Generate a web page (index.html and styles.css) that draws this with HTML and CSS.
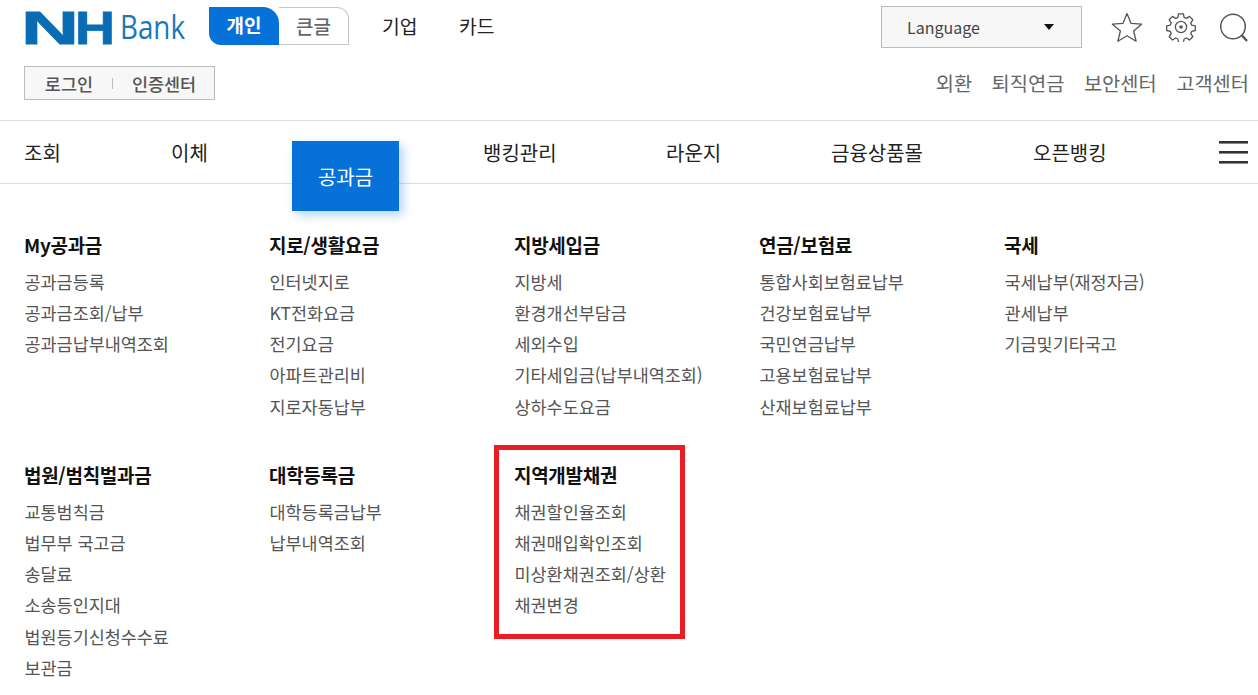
FILE: index.html
```html
<!DOCTYPE html>
<html lang="ko">
<head>
<meta charset="utf-8">
<title>NH Bank</title>
<link rel="stylesheet" href="styles.css">
</head>
<body>
<header class="top">
  <div class="top-left">
    <div class="brand-row">
      <svg class="logo" width="162" height="46" viewBox="0 0 162 46">
        <text class="logo-nh" x="-3" y="38" textLength="58" lengthAdjust="spacingAndGlyphs">N</text>
        <text class="logo-nh" x="51" y="38" textLength="40" lengthAdjust="spacingAndGlyphs">H</text>
        <text class="logo-bank" x="96" y="33" textLength="65" lengthAdjust="spacingAndGlyphs">Bank</text>
      </svg>
      <div class="toggle">
        <span class="toggle-on">개인</span>
        <span class="toggle-off">큰글</span>
      </div>
      <a class="seg">기업</a>
      <a class="seg">카드</a>
    </div>
    <div class="login-box">
      <span>로그인</span>
      <i class="sep"></i>
      <span>인증센터</span>
    </div>
  </div>
  <div class="top-right">
    <div class="tools">
      <div class="lang"><span>Language</span><i class="caret"></i></div>
      <svg class="tool-star" width="32" height="30" viewBox="0 0 32 30"><path d="M16 1.5l4 9.8 10.6.9-8 6.8 2.5 10.2-9.100-5.400-9.100 5.400 2.500-10.200-8-6.800 10.600-.9z" fill="none" stroke="#555" stroke-width="1.3" stroke-linejoin="round"/></svg>
      <svg class="tool-gear" width="30" height="30" viewBox="0 0 30 30"><path d="M12.6 1.800h4.800l.7 3.600 2.300 1 3.100-2 3.300 3.400-2 3 .9 2.400 3.600.7v4.600l-3.600.8-.9 2.300 2 3.100-3.300 3.300-3.100-2-2.300 1-.7 3.600h-4.800l-.7-3.600-2.300-1-3.100 2-3.300-3.300 2-3.100-.9-2.300-3.600-.8v-4.600l3.600-.7.9-2.400-2-3 3.300-3.400 3.100 2 2.300-1z" fill="none" stroke="#555" stroke-width="1.3" stroke-linejoin="round"/><circle cx="15" cy="15" r="5.600" fill="none" stroke="#555" stroke-width="1.3"/><circle cx="15" cy="15" r="1.800" fill="#555"/></svg>
      <svg class="tool-search" width="30" height="30" viewBox="0 0 30 30"><circle cx="13" cy="13.500" r="12.300" fill="none" stroke="#555" stroke-width="1.500"/><path d="M22 22.500l5 5.500" stroke="#555" stroke-width="2.400"/></svg>
    </div>
    <nav class="util">
      <a>외환</a><a>퇴직연금</a><a>보안센터</a><a>고객센터</a>
    </nav>
  </div>
</header>

<nav class="gnb">
  <a class="gnb-item w-jo">조회</a>
  <a class="gnb-item w-ic">이체</a>
  <a class="gnb-active">공과금</a>
  <a class="gnb-item w-bk">뱅킹관리</a>
  <a class="gnb-item w-ra">라운지</a>
  <a class="gnb-item w-gu">금융상품몰</a>
  <a class="gnb-item w-op">오픈뱅킹</a>
  <span class="burger"><i></i><i></i><i></i></span>
</nav>

<main class="menu">
  <section class="col">
    <h2>My공과금</h2>
    <ul><li>공과금등록</li><li>공과금조회/납부</li><li>공과금납부내역조회</li></ul>
  </section>
  <section class="col">
    <h2>지로/생활요금</h2>
    <ul><li>인터넷지로</li><li>KT전화요금</li><li>전기요금</li><li>아파트관리비</li><li>지로자동납부</li></ul>
  </section>
  <section class="col">
    <h2>지방세입금</h2>
    <ul><li>지방세</li><li>환경개선부담금</li><li>세외수입</li><li>기타세입금(납부내역조회)</li><li>상하수도요금</li></ul>
  </section>
  <section class="col">
    <h2>연금/보험료</h2>
    <ul><li>통합사회보험료납부</li><li>건강보험료납부</li><li>국민연금납부</li><li>고용보험료납부</li><li>산재보험료납부</li></ul>
  </section>
  <section class="col">
    <h2>국세</h2>
    <ul><li>국세납부(재정자금)</li><li>관세납부</li><li>기금및기타국고</li></ul>
  </section>
  <section class="col">
    <h2>법원/범칙벌과금</h2>
    <ul><li>교통범칙금</li><li>법무부 국고금</li><li>송달료</li><li>소송등인지대</li><li>법원등기신청수수료</li><li>보관금</li></ul>
  </section>
  <section class="col">
    <h2>대학등록금</h2>
    <ul><li>대학등록금납부</li><li>납부내역조회</li></ul>
  </section>
  <section class="col col-marked">
    <h2>지역개발채권</h2>
    <ul><li>채권할인율조회</li><li>채권매입확인조회</li><li>미상환채권조회/상환</li><li>채권변경</li></ul>
  </section>
</main>
</body>
</html>
```
FILE: styles.css
```css
*, *::before { box-sizing: border-box; }
html, body { margin: 0; padding: 0; }
body {
  width: 1258px;
  height: 695px;
  overflow: hidden;
  background: #fff;
  color: #222;
  font-family: "Noto Sans CJK KR", "Noto Sans", sans-serif;
}
ul { list-style: none; margin: 0; padding: 0; }
h2 { margin: 0; }

.top {
  height: 121px;
  padding: 6px 8px 0 24px;
  display: flex;
  justify-content: space-between;
  border-bottom: 1px solid #ddd;
}
.brand-row { display: flex; align-items: flex-start; height: 60px; }
.logo { display: block; margin-right: 23px; overflow: visible; }
.logo-nh { font: 700 47px "Liberation Sans", sans-serif; fill: #0a6cb3; stroke: #0a6cb3; stroke-width: .8px; }
.logo-bank { font: 400 32px "Open Sans", sans-serif; fill: #1a78b8; }

.toggle {
  display: flex;
  width: 140px;
  height: 38px;
  margin-top: 1px;
  font-size: 19px;
  line-height: 36px;
  font-weight: 500;
}
.toggle-on {
  width: 70px;
  background: #0671d9;
  color: #fff;
  text-align: center;
  border-radius: 0 16px 0 12px;
  font-weight: 700;
}
.toggle-off {
  width: 70px;
  color: #666;
  text-align: center;
  border: 1px solid #c4c4c4;
  border-left: 0;
  border-radius: 0 12px 0 0;
}
.seg { font-size: 19.3px; line-height: 40px; color: #222; margin-left: 33px; width: 44px; }
.seg + .seg { margin-left: 33px; }

.login-box {
  width: 191px;
  height: 34px;
  display: flex;
  align-items: center;
  justify-content: center;
  padding-left: 2px;
  background: #f7f7f7;
  border: 1px solid #bbb;
  font-size: 17.45px;
  color: #555;
  font-weight: 500;
}
.sep { width: 1px; height: 11px; background: #bbb; margin: 0 19px; }

.top-right { display: flex; flex-direction: column; align-items: flex-end; }
.tools { display: flex; align-items: center; height: 42px; }
.lang {
  width: 201px;
  height: 42px;
  background: #f7f7f7;
  border: 1px solid #bbb;
  display: flex;
  align-items: center;
  justify-content: space-between;
  padding: 0 27px 0 25px;
  font-size: 16px;
  color: #444;
}
.caret { width: 0; height: 0; border: 5px solid transparent; border-top: 6px solid #111; border-bottom: 0; }
.tool-star { margin-left: 29px; }
.tool-gear { margin-left: 23px; margin-right: 24px; }
.tool-search { margin-top: 2px; }

.util {
  display: flex;
  gap: 19.500px;
  margin-top: 21px;
  margin-right: 1px;
  font-size: 19.8px;
  line-height: 28px;
  color: #666;
}

.gnb {
  position: relative;
  height: 63px;
  border-bottom: 1px solid #ddd;
  display: flex;
  align-items: flex-start;
  padding-left: 24px;
  font-size: 20px;
  color: #222;
}
.gnb-item { line-height: 64px; display: block; }
.w-jo { width: 147px; }
.w-ic { width: 121px; }
.w-bk { margin-left: 84px; width: 183px; }
.w-ra { width: 165px; }
.w-gu { width: 202px; }
.w-op { width: 186px; }
.gnb-active {
  width: 107px;
  height: 70px;
  margin-top: 20px;
  background: #0671d9;
  color: #fff;
  text-align: center;
  line-height: 72px;
  box-shadow: 4px 4px 10px rgba(6, 113, 217, .3);
  position: relative;
  z-index: 1;
}
.burger {
  position: absolute;
  left: 1219px;
  top: 20px;
  width: 29px;
  display: flex;
  flex-direction: column;
  gap: 7px;
}
.burger i { display: block; height: 3px; background: #333; border-bottom: 1px solid #888; }

.menu {
  display: grid;
  grid-template-columns: repeat(5, 245px);
  grid-auto-rows: auto;
  padding: 46px 0 0 24px;
}
.col { height: 230px; }
.col h2 {
  font-size: 19px;
  line-height: 30px;
  font-weight: 700;
  color: #111;
  letter-spacing: -0.3px;
  margin-bottom: 5.7px;
}
.col li { font-size: 17.45px; line-height: 31.2px; color: #555; white-space: nowrap; padding-left: .5px; }
.col-marked { position: relative; }
.col-marked::before {
  content: "";
  position: absolute;
  left: -20px;
  top: -15px;
  width: 191px;
  height: 194px;
  border: 5px solid #ed1c24;
}
```
